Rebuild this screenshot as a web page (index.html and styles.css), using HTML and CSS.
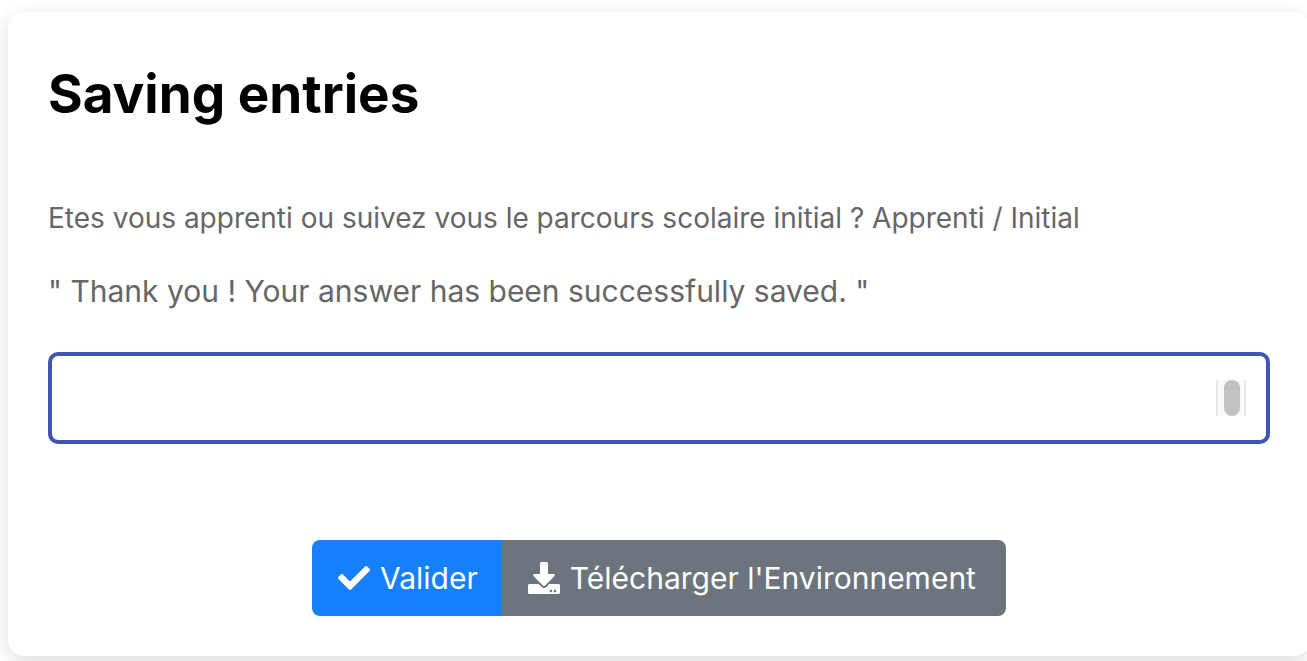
FILE: index.html
```html
<!DOCTYPE html>
<html lang="en">
<head>
<meta charset="utf-8">
<title>Saving entries</title>
<link rel="stylesheet" href="styles.css">
</head>
<body>
<main class="card">
  <h1 class="title">Saving entries</h1>
  <label class="question" for="answer">Etes vous apprenti ou suivez vous le parcours scolaire initial ? Apprenti / Initial</label>
  <p class="message">" Thank you ! Your answer has been successfully saved. "</p>
  <div class="field">
    <textarea class="answer" id="answer" rows="1"></textarea>
    <span class="track" aria-hidden="true"><span class="thumb"></span></span>
  </div>
  <div class="actions">
    <button class="btn primary" type="button">
      <svg class="icon" viewBox="0 0 512 512" aria-hidden="true"><path d="M173.898 439.404l-166.4-166.4c-9.997-9.997-9.997-26.206 0-36.204l36.203-36.204c9.997-9.998 26.207-9.998 36.204 0L192 312.69 432.095 72.596c9.997-9.997 26.207-9.997 36.204 0l36.203 36.204c9.997 9.997 9.997 26.206 0 36.204l-294.4 294.401c-9.998 9.997-26.207 9.997-36.204-.001z"/></svg>
      <span>Valider</span>
    </button>
    <button class="btn secondary" type="button">
      <svg class="icon" viewBox="0 0 512 512" aria-hidden="true"><path d="M216 0h80c13.300 0 24 10.700 24 24v168h87.700c17.800 0 26.700 21.500 14.100 34.100L269.700 378.300c-7.500 7.500-19.800 7.500-27.300 0L90.100 226.100c-12.600-12.600-3.700-34.100 14.100-34.100H192V24c0-13.300 10.700-24 24-24zm296 376v112c0 13.300-10.700 24-24 24H24c-13.300 0-24-10.700-24-24V376c0-13.300 10.700-24 24-24h146.700l49 49c20.100 20.100 52.500 20.100 72.600 0l49-49H488c13.300 0 24 10.700 24 24zm-124 88c0-11-9-20-20-20s-20 9-20 20 9 20 20 20 20-9 20-20zm64 0c0-11-9-20-20-20s-20 9-20 20 9 20 20 20 20-9 20-20z"/></svg>
      <span>Télécharger l'Environnement</span>
    </button>
  </div>
</main>
</body>
</html>
```
FILE: styles.css
```css
* {
  box-sizing: border-box;
}

html {
  overflow: hidden;
}

body {
  margin: 0;
  padding: 12px 0 5px 8px;
  background: #fff;
  color: #666;
  font-family: Inter, "Liberation Sans", sans-serif;
}

.card {
  display: flex;
  flex-direction: column;
  margin-right: -3px;
  padding: 40px;
  border-radius: 16px;
  background: #fff;
  box-shadow: 0 5px 20px rgba(0, 0, 0, 0.14);
}

.title {
  margin: 0 0 64px;
  color: #000;
  font-size: 53px;
  font-weight: 700;
  line-height: 84px;
}

.question {
  font-size: 28px;
  line-height: 36px;
}

.message {
  margin: 32px 0 38px;
  font-size: 30px;
  line-height: 46px;
}

.field {
  display: flex;
  align-items: center;
  padding: 24px 20px;
  border: 4px solid #4054b2;
  border-radius: 10px;
}

.answer {
  flex: 1;
  height: 36px;
  padding: 0;
  border: 0;
  outline: 0;
  background: none;
  color: inherit;
  font: inherit;
  font-size: 28px;
  line-height: 36px;
  resize: none;
  overflow: hidden;
}

.track {
  display: flex;
  width: 30px;
  height: 36px;
  padding-left: 6px;
  border: solid #e8e8e8;
  border-width: 0 2px;
  background: #fafafa;
}

.thumb {
  width: 16px;
  border-radius: 8px;
  background: #c1c1c1;
}

.actions {
  display: flex;
  justify-content: center;
  margin-top: 96px;
}

.btn {
  display: flex;
  align-items: center;
  gap: 10px;
  padding: 14px 24px 14px 26px;
  border: 0;
  color: #fff;
  font: inherit;
  font-size: 30px;
  line-height: 48px;
}

.primary {
  border-radius: 8px 0 0 8px;
  background: #167ffc;
}

.secondary {
  padding-right: 30px;
  border-radius: 0 8px 8px 0;
  background: #6c757d;
}

.icon {
  width: 32px;
  height: 32px;
  fill: currentColor;
}
```
